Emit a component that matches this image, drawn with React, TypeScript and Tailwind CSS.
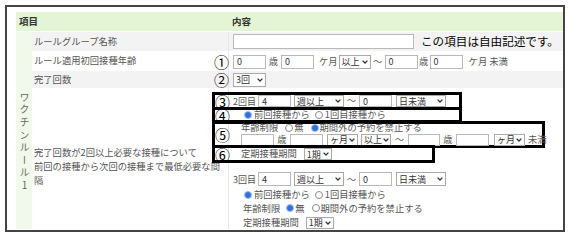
const jp = "font-['Noto_Sans_CJK_JP','Noto_Sans',sans-serif]";

const Input = ({ value = "", className = "" }: { value?: string; className?: string }) => (
  <div
    className={`${className} shrink-0 border border-[#b8b8b8] bg-white pl-[3px] flex items-center text-[9px] leading-none text-[#333]`}
  >
    {value}
  </div>
);

const Chevron = () => (
  <svg width="6" height="4" viewBox="0 0 6 4" className="shrink-0">
    <path d="M0.6 0.6 L3 3 L5.4 0.6" fill="none" stroke="#333" strokeWidth="1.3" />
  </svg>
);

const Select = ({ label, className = "" }: { label: string; className?: string }) => (
  <div
    className={`${className} shrink-0 overflow-hidden whitespace-nowrap border border-[#a9a9a9] bg-white pl-[2px] pr-[2px] flex items-center justify-between gap-[1px] text-[9px] leading-none text-[#333]`}
  >
    <span>{label}</span>
    <Chevron />
  </div>
);

const Radio = ({ on = false, className = "" }: { on?: boolean; className?: string }) =>
  on ? (
    <span className={`${className} shrink-0 w-[8px] h-[8px] rounded-full border border-[#9cc0f5] bg-[#2f6fe0]`} />
  ) : (
    <span className={`${className} shrink-0 w-[8px] h-[8px] rounded-full border border-[#8a8a8a] bg-white`} />
  );

const Num = ({ n, className = "" }: { n: string; className?: string }) => (
  <span className={`${className} relative shrink-0 w-[15px] text-[15px] leading-none text-black text-center`}>{n}</span>
);

const Txt = ({ children, className = "" }: { children: React.ReactNode; className?: string }) => (
  <span className={`${className} shrink-0 whitespace-nowrap text-[9.3px] leading-none text-[#555]`}>{children}</span>
);

export default function App() {
  return (
    <div className={`${jp} w-[577px] h-[240px] bg-white pt-[5px] pl-[5px]`}>
      <div className="w-[560px] h-[227px] border-2 border-[#444] pl-[9px] pt-[5px] overflow-hidden">
        <div className="grid grid-cols-[16px_196px_1fr] grid-rows-[20px_20px_19px_18px_140px]">
          {/* header */}
          <div className="col-span-2 bg-[#e3f5d5] border-b border-white flex items-center pl-[3px] text-[9.5px] font-bold text-[#333]">
            項目
          </div>
          <div className="bg-[#e3f5d5] border-b border-white flex items-center pl-[4px] text-[9.5px] font-bold text-[#333]">
            内容
          </div>

          {/* group cell */}
          <div className="row-span-4 bg-[#f1f9ea] flex justify-center pt-[60px]">
            <span className="[writing-mode:vertical-rl] [text-orientation:upright] text-[10px] tracking-[2.6px] text-[#666] leading-none">
              ワクチンルール1
            </span>
          </div>

          {/* row 1 */}
          <div className="bg-[#f3f3f3] border-b border-white flex items-center pl-[2px]">
            <Txt>ルールグループ名称</Txt>
          </div>
          <div className="bg-[#f3f3f3] border-b border-white border-l border-l-[#e6e6e6] flex items-center">
            <Input className="ml-[4px] w-[181px] h-[15px]" />
            <span className="ml-[7px] whitespace-nowrap text-[11.6px] leading-none text-black">この項目は自由記述です。</span>
          </div>

          {/* row 2 */}
          <div className="bg-white border-b border-white flex items-center pl-[2px]">
            <Txt>ルール適用初回接種年齢</Txt>
          </div>
          <div className="bg-white border-l border-l-[#e6e6e6] flex items-center">
            <Num n="①" className="-ml-[15px]" />
            <Input value="0" className="ml-[4px] w-[33px] h-[14px]" />
            <Txt className="w-[15px] text-center">歳</Txt>
            <Input value="0" className="w-[33px] h-[14px]" />
            <Txt className="ml-[5px]">ケ月</Txt>
            <Select label="以上" className="ml-[1px] w-[32px] h-[14px]" />
            <Txt className="w-[14px] text-center">〜</Txt>
            <Input value="0" className="w-[33px] h-[14px]" />
            <Txt className="w-[12px] text-center">歳</Txt>
            <Input value="0" className="w-[33px] h-[14px]" />
            <Txt className="ml-[6px]">ケ月 未満</Txt>
          </div>

          {/* row 3 */}
          <div className="bg-[#f3f3f3] border-b border-white flex items-center pl-[2px]">
            <Txt>完了回数</Txt>
          </div>
          <div className="bg-[#f3f3f3] border-b border-white border-l border-l-[#e6e6e6] flex items-center">
            <Num n="②" className="-ml-[15px]" />
            <Select label="3回" className="ml-[4px] w-[33px] h-[14px]" />
          </div>

          {/* row 4 */}
          <div className="bg-white pl-[2px] pt-[56px] text-[9.3px] leading-[14px] text-[#555]">
            完了回数が2回以上必要な接種について
            <br />
            前回の接種から次回の接種まで最低必要な間
            <br />
            隔
          </div>
          <div className="bg-white border-l border-l-[#e6e6e6] flex flex-col items-start">
            {/* ③ */}
            <div className="-ml-[17px] mt-[3px] w-[250px] h-[18px] border-[3px] border-black flex items-center">
              <Num n="③" />
              <span className="ml-[3px] w-[25px] text-[9px] leading-none text-[#555]">2回目</span>
              <Input value="4" className="w-[33px] h-[12px]" />
              <Select label="週以上" className="ml-[3px] w-[50px] h-[12px]" />
              <Txt className="w-[15px] text-center">〜</Txt>
              <Input value="0" className="w-[33px] h-[12px]" />
              <Select label="日未満" className="ml-[4px] w-[50px] h-[12px]" />
            </div>
            {/* ④ */}
            <div className="-ml-[17px] -mt-[3px] w-[250px] h-[16px] border-[3px] border-black flex items-center">
              <Num n="④" />
              <Radio on className="ml-[14px]" />
              <Txt className="ml-[2px]">前回接種から</Txt>
              <Radio className="ml-[5px]" />
              <Txt className="ml-[2px]">1回目接種から</Txt>
            </div>
            {/* ⑤ */}
            <div className="-ml-[17px] -mt-[2px] w-[333px] h-[27px] border-[3px] border-black flex items-center">
              <Num n="⑤" />
              <div className="ml-[11px] flex flex-col">
                <div className="h-[9px] flex items-center">
                  <Txt>年齢制限</Txt>
                  <Radio className="ml-[7px]" />
                  <Txt className="ml-[1px]">無</Txt>
                  <Radio on className="ml-[7px]" />
                  <Txt className="ml-[1px]">期間外の予約を禁止する</Txt>
                </div>
                <div className="mt-[1px] h-[12px] flex items-center">
                  <Input className="w-[33px] h-[12px]" />
                  <Txt className="w-[16px] text-center">歳</Txt>
                  <Input className="w-[33px] h-[12px]" />
                  <Select label="ヶ月" className="ml-[4px] w-[31px] h-[12px]" />
                  <Select label="以上" className="ml-[3px] w-[30px] h-[12px]" />
                  <Txt className="w-[17px] text-center">〜</Txt>
                  <Input className="w-[32px] h-[12px]" />
                  <Txt className="w-[16px] text-center">歳</Txt>
                  <Input className="w-[33px] h-[12px]" />
                  <Select label="ヶ月" className="ml-[5px] w-[31px] h-[12px]" />
                  <Txt className="ml-[3px]">未満</Txt>
                </div>
              </div>
            </div>
            {/* ⑥ */}
            <div className="-ml-[17px] -mt-[3px] w-[223px] h-[18px] border-[3px] border-black flex items-center">
              <Num n="⑥" />
              <Txt className="ml-[11px]">定期接種期間</Txt>
              <Select label="1期" className="ml-[7px] w-[28px] h-[12px]" />
            </div>

            {/* 3回目 */}
            <div className="ml-[4px] mt-[9px] h-[15px] flex items-center">
              <span className="w-[25px] text-[9px] leading-none text-[#555]">3回目</span>
              <Input value="4" className="w-[33px] h-[14px]" />
              <Select label="週以上" className="ml-[3px] w-[50px] h-[14px]" />
              <Txt className="w-[15px] text-center">〜</Txt>
              <Input value="0" className="w-[33px] h-[14px]" />
              <Select label="日未満" className="ml-[4px] w-[50px] h-[14px]" />
            </div>
            <div className="ml-[15px] mt-[3px] h-[10px] flex items-center">
              <Radio on />
              <Txt className="ml-[2px]">前回接種から</Txt>
              <Radio className="ml-[5px]" />
              <Txt className="ml-[2px]">1回目接種から</Txt>
            </div>
            <div className="ml-[14px] mt-[4px] h-[10px] flex items-center">
              <Txt>年齢制限</Txt>
              <Radio on className="ml-[6px]" />
              <Txt className="ml-[1px]">無</Txt>
              <Radio className="ml-[7px]" />
              <Txt className="ml-[1px]">期間外の予約を禁止する</Txt>
            </div>
            <div className="ml-[14px] mt-[3px] h-[13px] flex items-center">
              <Txt>定期接種期間</Txt>
              <Select label="1期" className="ml-[7px] w-[28px] h-[12px]" />
            </div>
          </div>
        </div>
      </div>
    </div>
  );
}
